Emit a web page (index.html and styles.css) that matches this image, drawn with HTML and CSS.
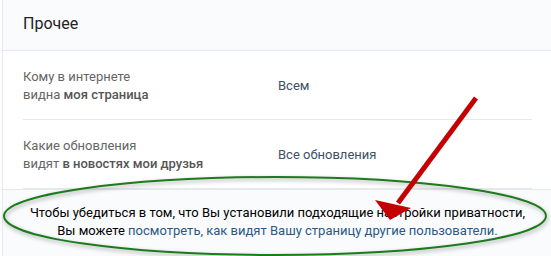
FILE: index.html
```html
<!DOCTYPE html>
<html lang="ru">
<head>
    <meta charset="UTF-8">
    <title>Прочее</title>
    <link rel="stylesheet" href="styles.css">
</head>
<body>
    <div class="page">
        <div class="card">
            <div class="card-header">Прочее</div>

            <div class="row">
                <div class="row-label">Кому в интернете<br>видна <b>моя страница</b></div>
                <div class="row-value">Всем</div>
            </div>
            <div class="row">
                <div class="row-label">Какие обновления<br>видят <b>в новостях мои друзья</b></div>
                <div class="row-value">Все обновления</div>
            </div>

            <div class="card-footer">
                Чтобы убедиться в том, что Вы установили подходящие настройки приватности,<br>
                Вы можете <a href="#" class="link">посмотреть, как видят Вашу страницу другие пользователи.</a>
            </div>
        </div>

        <!-- пометки поверх скриншота -->
        <svg class="marks" width="551" height="256" viewBox="0 0 551 256">
            <ellipse class="oval" cx="275" cy="216" rx="271" ry="39"/>
            <line class="arrow-line" x1="476" y1="98" x2="398" y2="203"/>
            <polygon class="arrow-head" points="390,220 375,200 411,208"/>
        </svg>
    </div>
</body>
</html>
```

FILE: styles.css
```css
body {
    margin: 0;
    padding: 0;
    background-color: #ffffff;
    font-family: Roboto, "Open Sans", Arial, sans-serif;
    font-size: 13px;
    overflow: hidden;
}

.page {
    position: relative;
    width: 551px;
    height: 256px;
    overflow: hidden;
}

.card {
    margin-left: 2px;
    width: 550px;
    border-left: 1px solid #e7e8ec;
    box-sizing: border-box;
    background-color: #ffffff;
}

.card-header {
    height: 50px;
    line-height: 47px;
    padding: 0 20px;
    font-size: 16px;
    color: #222222;
    background-color: #fafbfc;
    border-bottom: 1px solid #e7e8ec;
}

.row {
    display: flex;
    align-items: center;
    margin: 0 20px;
    padding: 17px 0 15px;
    line-height: 18px;
    border-bottom: 1px solid #e7e8ec;
}

.row:last-of-type {
    border-bottom: none;
    padding-bottom: 19px;
}

.row-label {
    width: 255px;
    color: #656565;
}

.row-label b {
    font-weight: 500;
    color: #555555;
}

.row-value {
    color: #3e4f66;
}

.card-footer {
    padding: 14px 20px 30px;
    text-align: center;
    line-height: 18px;
    color: #000000;
    background-color: #fafbfc;
    border-top: 1px solid #e7e8ec;
}

.link {
    color: #2a5885;
    text-decoration: none;
}

.marks {
    position: absolute;
    top: 0;
    left: 0;
    pointer-events: none;
}

.oval {
    fill: none;
    stroke: #1d7a1d;
    stroke-width: 2;
    filter: drop-shadow(1px 2px 2px rgba(0, 0, 0, 0.35));
}

.arrow-line {
    stroke: #c40000;
    stroke-width: 5;
}

.arrow-head {
    fill: #c40000;
}
```
